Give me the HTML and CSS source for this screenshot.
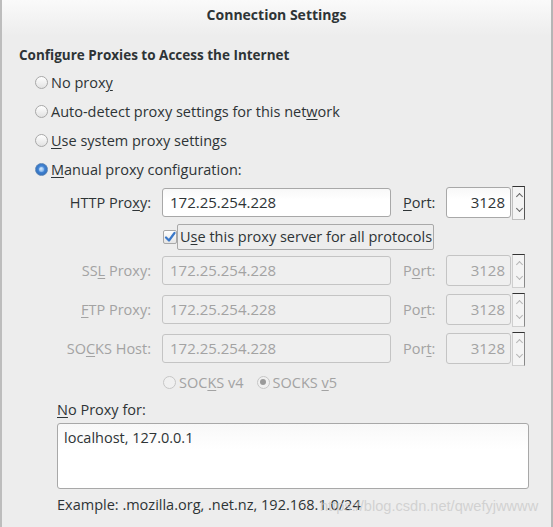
FILE: index.html
```html
<!DOCTYPE html>
<html>
<head>
<meta charset="utf-8">
<link rel="stylesheet" href="styles.css">
</head>
<body>
<div class="window">
  <div class="titlebar">Connection Settings</div>
  <div class="content">
    <div class="heading">Configure Proxies to Access the Internet</div>
    <div class="radios">
      <div class="radio-row"><span class="radio"></span><span>No prox<u>y</u></span></div>
      <div class="radio-row"><span class="radio"></span><span>Auto-detect proxy settings for this net<u>w</u>ork</span></div>
      <div class="radio-row"><span class="radio"></span><span><u>U</u>se system proxy settings</span></div>
      <div class="radio-row"><span class="radio checked"></span><span><u>M</u>anual proxy configuration:</span></div>
    </div>
    <div class="proxy-grid">
      <div class="lbl">HTTP Pro<u>x</u>y:</div>
      <div class="field">172.25.254.228</div>
      <div class="port-lbl"><u>P</u>ort:</div>
      <div class="port">3128</div>
      <div class="spin"><span class="up"></span><span class="down"></span></div>

      <div class="check-row">
        <span class="checkbox"><svg width="12" height="12" viewBox="0 0 12 12"><path d="M2 6.5 L5 9.5 L10.5 2" fill="none" stroke="#3a78c9" stroke-width="2.2" stroke-linecap="round" stroke-linejoin="round"/></svg></span>
        <span class="check-label">U<u>s</u>e this proxy server for all protocols</span>
      </div>

      <div class="lbl dis">SS<u>L</u> Proxy:</div>
      <div class="field dis">172.25.254.228</div>
      <div class="port-lbl dis">P<u>o</u>rt:</div>
      <div class="port dis">3128</div>
      <div class="spin dis"><span class="up"></span><span class="down"></span></div>

      <div class="lbl dis"><u>F</u>TP Proxy:</div>
      <div class="field dis">172.25.254.228</div>
      <div class="port-lbl dis">Po<u>r</u>t:</div>
      <div class="port dis">3128</div>
      <div class="spin dis"><span class="up"></span><span class="down"></span></div>

      <div class="lbl dis">SO<u>C</u>KS Host:</div>
      <div class="field dis">172.25.254.228</div>
      <div class="port-lbl dis">Por<u>t</u>:</div>
      <div class="port dis">3128</div>
      <div class="spin dis"><span class="up"></span><span class="down"></span></div>
    </div>
    <div class="socks">
      <div class="radio-row dis"><span class="radio dis"></span><span>SOC<u>K</u>S v4</span></div>
      <div class="radio-row dis"><span class="radio dis dchecked"></span><span>SOCKS <u>v</u>5</span></div>
    </div>
    <div class="noproxy">
      <div class="np-label"><u>N</u>o Proxy for:</div>
      <div class="textarea">localhost, 127.0.0.1</div>
      <div class="example">Example: .mozilla.org, .net.nz, 192.168.1.0/24</div>
    </div>
    <div class="radio-row last"><span class="radio"></span></div>
  </div>
  <div class="watermark">https://blog.csdn.net/qwefyjwwww</div>
</div>
</body>
</html>
```
FILE: styles.css
```css
* { box-sizing: border-box; }
html, body { margin: 0; padding: 0; }
body {
  width: 553px;
  height: 527px;
  overflow: hidden;
  background: #ededed;
  font-family: "Open Sans", "DejaVu Sans", sans-serif;
  font-size: 14.5px;
  color: #2e3436;
}
u { text-decoration: underline; text-underline-offset: 2px; }
.window {
  position: relative;
  height: 527px;
  overflow: hidden;
  border-left: 2px solid #bdbdbd;
  border-right: 2px solid #b5b5b5;
  background: #ededed;
}
.titlebar {
  height: 36px;
  padding-top: 5px;
  text-align: center;
  font-weight: bold;
  font-size: 14px;
  background: linear-gradient(#fafafa, #ededed);
}
.content { padding-left: 17px; }
.heading {
  font-weight: bold;
  font-size: 13.5px;
  margin-top: 10px;
  height: 22px;
}
.radios { display: flex; flex-direction: column; margin-top: 0px; padding-left: 16px; }
.radio-row { display: flex; align-items: center; height: 29px; gap: 3px; }
.radio {
  width: 13px; height: 13px; border-radius: 50%;
  border: 1px solid #a8a8a8;
  background: linear-gradient(#ffffff, #e2e2e2);
  flex: none;
  position: relative;
}
.radio.checked {
  border-color: #5b86b8;
  background: radial-gradient(circle at 50% 45%, #8bbcf0 0, #3d7fd0 45%, #2d64aa 100%);
}
.radio.checked::after {
  content: ""; position: absolute; left: 3px; top: 3px; width: 5px; height: 5px; border-radius: 50%;
  background: radial-gradient(circle at 40% 35%, #d8ecff, #5d9ae0);
}
.radio.dis { border-color: #c6c6c6; background: #f0f0f0; }
.radio.dchecked::after {
  content: ""; position: absolute; left: 2.5px; top: 2.5px; width: 6px; height: 6px; border-radius: 50%;
  background: #9a9a9a;
}
.proxy-grid {
  display: grid;
  grid-template-columns: 105px 229px 55px 65px 14px;
  grid-template-rows: 29px 19px 29px 29px 29px;
  row-gap: 10px;
  margin-left: 38px;
  margin-top: 4px;
  align-items: center;
}
.lbl { text-align: right; padding-right: 11px; white-space: nowrap; }
.field {
  height: 29px; line-height: 27px;
  border: 1px solid #a8a8a8; border-radius: 3px;
  background: linear-gradient(#f8f8f8, #ffffff 40%);
  padding-left: 7px;
  font-size: 15px;
}
.port-lbl { padding-left: 12px; }
.port {
  height: 31px; line-height: 29px;
  border: 1px solid #a8a8a8; border-radius: 3px;
  background: linear-gradient(#f8f8f8, #ffffff 40%);
  text-align: right; padding-right: 5px;
  font-size: 15px;
}
.spin {
  height: 34px; display: flex; flex-direction: column;
  border: 1px solid #c0c0c0; border-top: 1px solid #333; border-right: 1px solid #555;
  background: #f4f4f4;
  margin-left: 1px;
}
.spin span { flex: 1; position: relative; }
.spin .up::after, .spin .down::after {
  content: ""; position: absolute; left: 4px; width: 4px; height: 4px;
  border-left: 1.3px solid #666; border-top: 1.3px solid #666;
}
.spin .up::after { top: 7px; transform: rotate(45deg); }
.spin .down::after { top: 3px; transform: rotate(225deg); }
.spin.dis { border-color: #cfcfcf; border-top-color: #333; border-right-color: #888; }
.spin.dis .up::after, .spin.dis .down::after { border-color: #b5b5b5; }
.check-row {
  grid-column: 2 / 6;
  display: flex; align-items: center;
  height: 26px;
  align-self: center;
}
.checkbox {
  width: 14px; height: 14px; border: 1px solid #a8a8a8; border-radius: 2px;
  background: linear-gradient(#fff, #e4e4e4);
  display: flex; align-items: center; justify-content: center;
  margin-left: 1px; flex: none;
}
.check-label {
  height: 26px; line-height: 24px;
  border: 1px solid #a9a9a9; border-radius: 2px;
  padding: 0 1px 0 2px;
  white-space: nowrap;
}
.dis { color: #a3a3a3; }
.field.dis, .port.dis {
  background: #efefef; border-color: #c4c4c4;
}
.socks { display: flex; gap: 13px; margin-left: 144px; margin-top: 4px; height: 30px; align-items: center; }
.socks .radio-row { gap: 3px; }
.noproxy { margin-left: 38px; margin-right: 22px; margin-top: 4px; }
.np-label { height: 22px; line-height: 18px; }
.textarea {
  height: 66px;
  border: 1px solid #a8a8a8; border-radius: 3px;
  background: linear-gradient(#f8f8f8, #ffffff 40%);
  padding: 4px 6px;
}
.example { height: 28px; line-height: 32px; }
.last { padding-left: 16px; margin-top: 3px; }
.watermark {
  position: absolute; left: 318px; top: 498px;
  font-family: "Liberation Sans", sans-serif; font-size: 14.6px;
  color: rgba(200, 200, 200, 0.75);
}
```
